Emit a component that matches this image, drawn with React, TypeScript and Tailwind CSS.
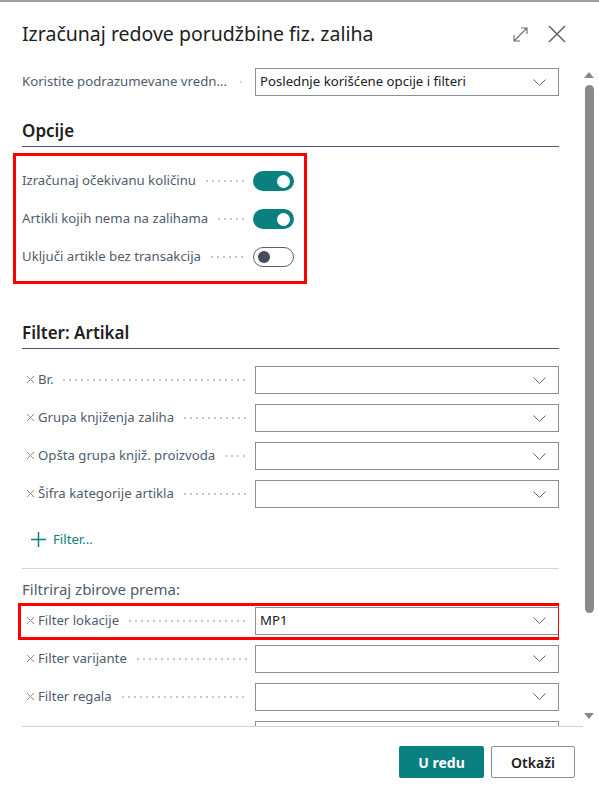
import React from "react";

const TEAL = "#0a8080";

function Chevron() {
  return (
    <svg width="13" height="7" viewBox="0 0 13 7" fill="none">
      <path d="M0.5 0.5l6 6 6-6" stroke="#5f6773" strokeWidth="1" />
    </svg>
  );
}

function Leader() {
  return (
    <div className="flex-1 mx-[8px] h-[2px] bg-[radial-gradient(circle,#c4c7cc_0.9px,transparent_1px)] bg-[length:6px_2px] bg-repeat-x" />
  );
}

function SelectBox({ value }: { value?: string }) {
  return (
    <div className="w-[304px] h-[28px] border border-[#8a8f96] flex items-center justify-between pl-[4px] pr-[12px] text-[13.2px] text-[#212121]">
      <span>{value ?? ""}</span>
      <Chevron />
    </div>
  );
}

function XMark() {
  return (
    <svg width="9" height="9" viewBox="0 0 9 9" className="shrink-0 mr-[3px]">
      <path d="M1 1l7 7M8 1l-7 7" stroke="#8a8f96" strokeWidth="1" />
    </svg>
  );
}

function FilterRow({ label, value }: { label: string; value?: string }) {
  return (
    <div className="flex items-center h-[28px]">
      <div className="w-[233px] flex items-center pl-[4px] text-[13.2px] text-[#505c6d]">
        <XMark />
        <span className="whitespace-nowrap">{label}</span>
        <Leader />
      </div>
      <SelectBox value={value} />
    </div>
  );
}

function Toggle({ on }: { on: boolean }) {
  return on ? (
    <div className="w-[41px] h-[20px] rounded-full bg-[#0a8080] flex items-center justify-end pr-[4px]">
      <div className="w-[13px] h-[13px] rounded-full bg-white" />
    </div>
  ) : (
    <div className="w-[41px] h-[20px] rounded-full border border-[#5a5f68] bg-white flex items-center pl-[4px]">
      <div className="w-[12px] h-[12px] rounded-full bg-[#464d5c]" />
    </div>
  );
}

function ToggleRow({ label, on }: { label: string; on: boolean }) {
  return (
    <div className="flex items-center h-[20px]">
      <div className="w-[231px] flex items-center text-[13.2px] text-[#505c6d]">
        <span className="whitespace-nowrap">{label}</span>
        <Leader />
      </div>
      <Toggle on={on} />
    </div>
  );
}

function Heading({ children }: { children: React.ReactNode }) {
  return (
    <div className="border-b border-[#505c6d] pb-[3px] text-[17px] font-semibold text-[#212121] leading-[24px]">
      {children}
    </div>
  );
}

export default function App() {
  return (
    <div
      className="w-[599px] h-[800px] bg-white border-t-2 border-[#a0a0a0] flex flex-col overflow-hidden"
      style={{ fontFamily: '"Segoe UI", "Noto Sans", sans-serif' }}
    >
      {/* Header */}
      <div className="flex items-start justify-between pl-[22px] pr-[33px] pt-[18px] h-[58px]">
        <h1 className="text-[19.5px] text-[#212121] leading-[28px]">
          Izračunaj redove porudžbine fiz. zaliha
        </h1>
        <div className="flex items-center gap-[19px] h-[28px]">
          <svg width="17" height="17" viewBox="0 0 17 17" fill="none">
            <path d="M2 15L15 2M9 2h6v6M2 9v6h6" stroke="#6b6b6b" strokeWidth="1.1" />
          </svg>
          <svg width="18" height="18" viewBox="0 0 18 18" fill="none">
            <path d="M1 1l16 16M17 1L1 17" stroke="#616161" strokeWidth="1.5" />
          </svg>
        </div>
      </div>

      {/* Body */}
      <div className="flex h-[666px]">
        <div className="w-[559px] pl-[22px] overflow-hidden flex flex-col">
          <div className="flex items-center h-[28px] mt-[8px]">
            <div className="w-[233px] flex items-center text-[13.2px] text-[#505c6d]">
              <span className="whitespace-nowrap">Koristite podrazumevane vredn...</span>
              <div className="flex-1 flex justify-center">
                <div className="w-[2px] h-[2px] rounded-full bg-[#c4c7cc]" />
              </div>
            </div>
            <SelectBox value="Poslednje korišćene opcije i filteri" />
          </div>

          <div className="mt-[23px]">
            <Heading>Opcije</Heading>
          </div>

          <div className="relative mt-[24px] flex flex-col gap-[18px]">
            <div className="absolute -left-[9px] -top-[18px] w-[294px] h-[131px] border-[3px] border-[#ff0000] pointer-events-none" />
            <ToggleRow label="Izračunaj očekivanu količinu" on />
            <ToggleRow label="Artikli kojih nema na zalihama" on />
            <ToggleRow label="Uključi artikle bez transakcija" on={false} />
          </div>

          <div className="mt-[54px]">
            <Heading>Filter: Artikal</Heading>
          </div>

          <div className="mt-[17px] flex flex-col gap-[10px]">
            <FilterRow label="Br." />
            <FilterRow label="Grupa knjiženja zaliha" />
            <FilterRow label="Opšta grupa knjiž. proizvoda" />
            <FilterRow label="Šifra kategorije artikla" />
          </div>

          <div className="mt-[22px] flex items-center gap-[6px] pl-[8px] h-[22px] text-[13.2px]" style={{ color: TEAL }}>
            <svg width="17" height="17" viewBox="0 0 17 17" fill="none">
              <path d="M8.5 1v15M1 8.5h15" stroke={TEAL} strokeWidth="1.5" />
            </svg>
            <span>Filter...</span>
          </div>

          <div className="mt-[18px] border-t border-[#d0d3d7]" />

          <div className="mt-[10px] text-[15px] text-[#505c6d] leading-[20px]">Filtriraj zbirove prema:</div>

          <div className="relative mt-[8px]">
            <div className="absolute -left-[4px] -top-[4px] w-[543px] h-[37px] border-[3px] border-[#ff0000] pointer-events-none" />
            <FilterRow label="Filter lokacije" value="MP1" />
          </div>

          <div className="mt-[10px] flex flex-col gap-[10px]">
            <FilterRow label="Filter varijante" />
            <FilterRow label="Filter regala" />
            <FilterRow label="" />
          </div>
        </div>

        {/* Scrollbar */}
        <div className="w-[40px] flex justify-end pr-[3px] pt-[12px] pb-[6px]">
          <div className="w-[14px] flex flex-col items-center">
            <svg width="10" height="7" viewBox="0 0 10 7">
              <path d="M5 0L10 6H0z" fill="#8a8a8a" />
            </svg>
            <div className="mt-[6px] w-[9px] h-[528px] rounded-full bg-[#8a8a8a]" />
            <div className="flex-1" />
            <svg width="10" height="7" viewBox="0 0 10 7">
              <path d="M0 0h10L5 6z" fill="#8a8a8a" />
            </svg>
          </div>
        </div>
      </div>

      {/* Footer */}
      <div className="ml-[22px] w-[561px] border-t border-[#d0d3d7]" />
      <div className="flex justify-end gap-[7px] pr-[24px] pt-[19px]">
        <button className="w-[85px] h-[32px] rounded-[2px] bg-[#0a8080] text-white text-[14px] font-bold">
          U redu
        </button>
        <button className="w-[84px] h-[32px] rounded-[2px] border border-[#8a8f96] bg-white text-[#212121] text-[14px] font-semibold">
          Otkaži
        </button>
      </div>
    </div>
  );
}
